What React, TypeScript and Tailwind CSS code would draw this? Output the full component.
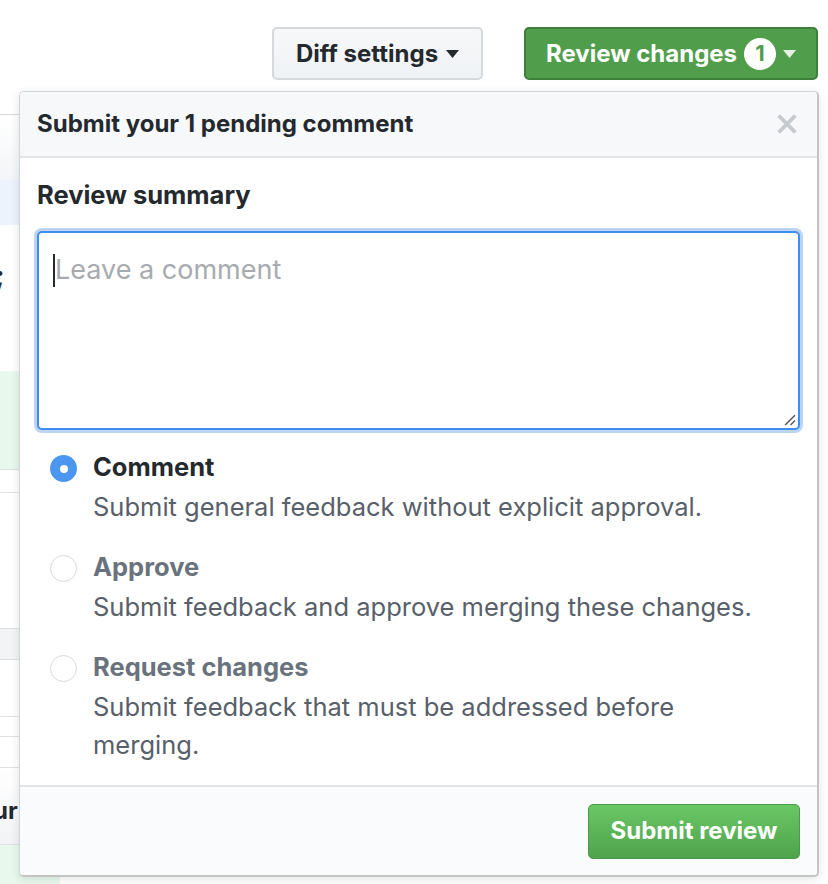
import React from 'react';

const font = { fontFamily: 'Inter, "Noto Sans", sans-serif' };

const Caret: React.FC<{ className?: string }> = ({ className }) => (
  <svg viewBox="0 0 10 6" className={className} fill="currentColor">
    <path d="M0 0h10L5 6z" />
  </svg>
);

interface OptionProps {
  title: string;
  description: string;
  checked?: boolean;
}

const ReviewOption: React.FC<OptionProps> = ({ title, description, checked }) => (
  <div className="flex gap-[16px]">
    <div className="pt-[9px]">
      {checked ? (
        <div className="w-[27px] h-[27px] rounded-full bg-[#4a96f0] flex items-center justify-center">
          <div className="w-[8px] h-[8px] rounded-full bg-white" />
        </div>
      ) : (
        <div className="w-[27px] h-[27px] rounded-full border border-[#d8dadd] bg-white" />
      )}
    </div>
    <div className="flex-1">
      <div className={`text-[25.5px] font-bold leading-[42px] ${checked ? 'text-[#24292e]' : 'text-[#6a737d]'}`}>
        {title}
      </div>
      <div className="text-[25.5px] leading-[38px] text-[#586069] pr-[40px]">{description}</div>
    </div>
  </div>
);

export default function App() {
  return (
    <div className="relative w-[828px] h-[884px] overflow-hidden bg-white text-[#24292e]" style={font}>
      {/* Toolbar */}
      <div className="flex justify-end gap-[41px] pt-[27px] pr-[10px]">
        <button className="h-[53px] w-[211px] rounded-[5px] border-2 border-[#d6d9dc] bg-gradient-to-b from-[#f7f8fa] to-[#eff2f5] flex items-center justify-center gap-[8px] text-[24px] font-bold text-[#24292e]">
          Diff settings
          <Caret className="w-[13px] h-[8px]" />
        </button>
        <button className="h-[53px] w-[294px] rounded-[5px] border-2 border-[#3e7f3b] bg-[#509e4c] flex items-center justify-center gap-[7px] text-[24px] font-bold text-white">
          Review changes
          <span className="w-[32px] h-[32px] rounded-full bg-white text-[#509e4c] text-[22px] flex items-center justify-center">
            1
          </span>
          <Caret className="w-[13px] h-[8px] text-[#e6f0e5]" />
        </button>
      </div>

      {/* Page content behind the popup */}
      <div className="mt-[34px] w-[60px] border-t border-[#d6d9dc]">
        <div className="h-[65px] bg-gradient-to-b from-white to-[#f3f5f8]" />
        <div className="h-[45px] bg-[#edf3fc]" />
        <div className="h-[146px] pt-[38px]">
          <div className="text-[28px] font-bold leading-[26px] -ml-[5px]">;</div>
        </div>
        <div className="h-[99px] bg-[#e8f8ec] border-b border-[#dfe2e5]" />
        <div className="h-[23px] border-b border-[#dfe2e5]" />
        <div className="h-[136px] border-b border-[#dfe2e5]" />
        <div className="h-[31px] bg-[#f3f4f6] border-b border-[#dfe2e5]" />
        <div className="h-[57px] border-b border-[#dfe2e5]" />
        <div className="h-[20px] border-b border-[#dfe2e5]" />
        <div className="h-[31px] border-b border-[#dfe2e5]" />
        <div className="h-[77px] flex items-center pt-[10px] text-[24px] font-bold -ml-[7px] bg-gradient-to-b from-white to-[#f1f3f5] border-b border-[#dfe2e5]">
          ur
        </div>
        <div className="h-[40px] bg-[#e8f8ec]" />
      </div>

      {/* Review popup */}
      <div className="absolute left-[19px] top-[91px] w-[800px] h-[786px] flex flex-col rounded-[5px] border border-[#d1d5da] border-r-2 border-r-[#c4c4c4] border-b-2 border-b-[#c4c4c4] bg-white shadow-[0_2px_10px_rgba(27,31,35,0.12)] overflow-hidden">
        <div className="h-[66px] shrink-0 flex items-center justify-between px-[17px] bg-[#f6f8fa] border-b-2 border-[#e1e4e8]">
          <span className="text-[24px] font-bold">Submit your 1 pending comment</span>
          <svg viewBox="0 0 12 12" className="w-[20px] h-[20px] mr-[3px]" stroke="#c6c9cd" strokeWidth="2.2">
            <path d="M1 1l10 10M11 1L1 11" />
          </svg>
        </div>

        <div className="flex-1 px-[17px] pt-[20px]">
          <div className="text-[25.5px] font-bold leading-[34px]">Review summary</div>
          <div className="relative mt-[19px] h-[199px] rounded-[5px] border-2 border-[#3d8ef0] bg-white shadow-[0_0_0_3px_#bcd3f3]">
            <div className="absolute left-[14px] top-[21px] w-[2px] h-[33px] bg-[#24292e]" />
            <div className="pt-[19px] pl-[16px] text-[27px] leading-[36px] text-[#a7abb0]">Leave a comment</div>
            <svg viewBox="0 0 12 12" className="absolute right-[2px] bottom-[2px] w-[13px] h-[13px]" stroke="#555" strokeWidth="1.3">
              <path d="M2 11L11 2M7 11L11 7" />
            </svg>
          </div>

          <div className="mt-[16px] pl-[13px] flex flex-col gap-[20px]">
            <ReviewOption title="Comment" description="Submit general feedback without explicit approval." checked />
            <ReviewOption title="Approve" description="Submit feedback and approve merging these changes." />
            <ReviewOption title="Request changes" description="Submit feedback that must be addressed before merging." />
          </div>
        </div>

        <div className="h-[90px] shrink-0 flex items-center justify-end px-[17px] bg-[#fafbfc] border-t-2 border-[#e1e4e8]">
          <button className="h-[55px] w-[212px] rounded-[5px] border border-[#4b9a49] bg-gradient-to-b from-[#6ac765] to-[#4fa34c] text-[24px] font-bold text-white">
            Submit review
          </button>
        </div>
      </div>
    </div>
  );
}
